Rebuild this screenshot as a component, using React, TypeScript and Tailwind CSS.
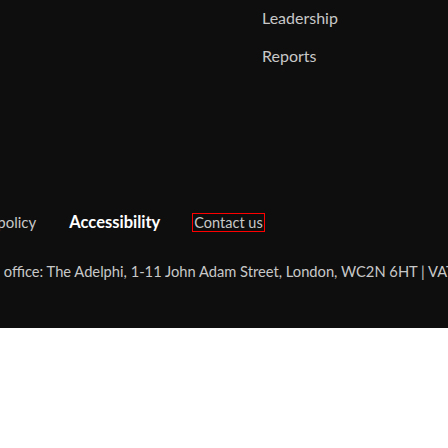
const sections = ["Leadership", "Reports"];

export default function App() {
  return (
    <div className="w-[448px] h-[448px] bg-white overflow-hidden font-['Lato',sans-serif]">
      <div className="h-[328px] bg-[#0e0e0e] overflow-hidden text-[#c8c8c8] text-[16px]">
        {/* Column links */}
        <ul className="ml-[262px] pt-[8px] flex flex-col gap-[18px]">
          {sections.map((s) => (
            <li key={s} className="leading-[20px]">{s}</li>
          ))}
        </ul>

        {/* Legal links */}
        <div className="mt-[146px] flex items-center whitespace-nowrap ml-[-54px] leading-[20px] text-[15px]">
          <span>Privacy policy</span>
          <span className="ml-[33px] font-bold text-white text-[16.5px]">Accessibility</span>
          <span className="ml-[33px] px-[1px] outline outline-[#ff0000] text-[14.5px] leading-[17px]">Contact us</span>
        </div>

        {/* Address */}
        <p className="mt-[29px] whitespace-nowrap ml-[-68px] text-[14.7px] leading-[20px]">
          Registered office: The Adelphi, 1-11 John Adam Street, London, WC2N 6HT | VAT number 123 4567 89
        </p>
      </div>
    </div>
  );
}
